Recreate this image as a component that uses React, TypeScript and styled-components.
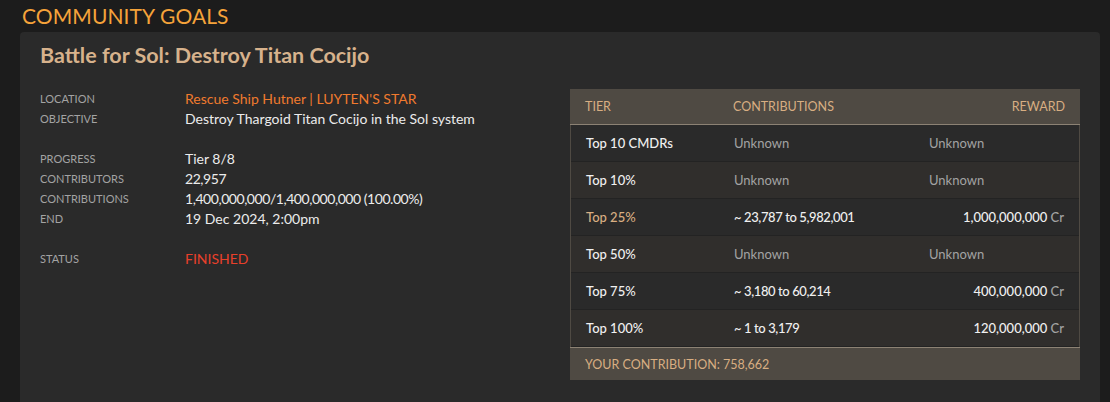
import React from "react";
import styled, { createGlobalStyle } from "styled-components";

const Global = createGlobalStyle`
  html, body { margin: 0; padding: 0; background: #1c1c1c; }
  body { font-family: "Lato", "Open Sans", sans-serif; color: #e6e6e6; }
  * { box-sizing: border-box; }
`;

const Page = styled.div`
  padding: 4px 10px 0 20px;
  height: 402px;
  overflow: hidden;
`;

const Heading = styled.h1`
  margin: 0 0 4px 2px;
  font-size: 21px;
  font-weight: 400;
  line-height: 24px;
  color: #f5a33a;
  letter-spacing: 0.1px;
`;

const Card = styled.section`
  background: #2a2a2a;
  border-radius: 4px 4px 0 0;
  padding: 10px 20px 20px 20px;
  min-height: 380px;
`;

const Title = styled.h2`
  margin: 0 0 21px 0;
  font-size: 21.5px;
  font-weight: 700;
  line-height: 26px;
  color: #d7b28c;
`;

const Body = styled.div`
  display: grid;
  grid-template-columns: 1fr 510px;
  gap: 20px;
  align-items: start;
`;

const Info = styled.div`
  display: flex;
  flex-direction: column;
  gap: 20px;
`;

const InfoGroup = styled.dl`
  margin: 0;
  display: grid;
  grid-template-columns: 145px 1fr;
`;

const Label = styled.dt`
  font-size: 11px;
  line-height: 20px;
  color: #a3a3a3;
  text-transform: uppercase;
`;

const Value = styled.dd<{ $tone?: "link" | "alert"; $num?: boolean }>`
  margin: 0;
  font-size: 14px;
  line-height: 20px;
  letter-spacing: ${(p) => (p.$num ? "-0.45px" : "0")};
  color: ${(p) => (p.$tone === "link" ? "#f07a2e" : p.$tone === "alert" ? "#e8402a" : "#ececec")};
`;

const Table = styled.div`
  border: 1px solid #4f4a43;
  border-top: none;
  background: #2a2a2a;
`;

const Grid = styled.div`
  display: grid;
  grid-template-columns: 148px 195px 1fr;
  align-items: center;
`;

const HeadRow = styled(Grid)`
  background: #4f4a43;
  height: 36px;
  border-bottom: 1px solid #8c8274;
  margin: 0 -1px;
  padding: 0 15px;
`;

const HeadCell = styled.div<{ $right?: boolean }>`
  font-size: 12.5px;
  color: #d8ae82;
  text-transform: uppercase;
  text-align: ${(p) => (p.$right ? "right" : "left")};
`;

const Row = styled(Grid)<{ $alt?: boolean }>`
  height: 37px;
  padding: 0 15px;
  background: ${(p) => (p.$alt ? "#302e2c" : "#2a2a2a")};
  border-bottom: 1px solid #232323;
  &:last-of-type { border-bottom: none; }
`;

const Cell = styled.div<{ $tone?: "muted" | "gold"; $right?: boolean; $num?: boolean }>`
  font-size: 13px;
  letter-spacing: ${(p) => (p.$num ? "-0.4px" : "0")};
  font-weight: ${(p) => (p.$tone === "muted" ? 400 : 500)};
  color: ${(p) => (p.$tone === "muted" ? "#a3a3a3" : p.$tone === "gold" ? "#d8ae82" : "#f0f0f0")};
  text-align: ${(p) => (p.$right ? "right" : "left")};
  white-space: nowrap;
`;

const Unit = styled.span`
  color: #a3a3a3;
  letter-spacing: 0;
`;

const Footer = styled.div`
  background: #4f4a43;
  border-top: 1px solid #8c8274;
  height: 33px;
  margin: 0 -1px -1px;
  padding: 0 15px;
  display: flex;
  align-items: center;
  font-size: 12.5px;
  color: #d8ae82;
  text-transform: uppercase;
`;

type Tier = { tier: string; contrib?: string; reward?: string; mine?: boolean };

const tiers: Tier[] = [
  { tier: "Top 10 CMDRs" },
  { tier: "Top 10%" },
  { tier: "Top 25%", contrib: "~ 23,787 to 5,982,001", reward: "1,000,000,000", mine: true },
  { tier: "Top 50%" },
  { tier: "Top 75%", contrib: "~ 3,180 to 60,214", reward: "400,000,000" },
  { tier: "Top 100%", contrib: "~ 1 to 3,179", reward: "120,000,000" },
];

export default function App() {
  return (
    <>
      <Global />
      <Page>
        <Heading>COMMUNITY GOALS</Heading>
        <Card>
          <Title>Battle for Sol: Destroy Titan Cocijo</Title>
          <Body>
            <Info>
              <InfoGroup>
                <Label>Location</Label>
                <Value $tone="link">Rescue Ship Hutner | LUYTEN'S STAR</Value>
                <Label>Objective</Label>
                <Value>Destroy Thargoid Titan Cocijo in the Sol system</Value>
              </InfoGroup>
              <InfoGroup>
                <Label>Progress</Label>
                <Value>Tier 8/8</Value>
                <Label>Contributors</Label>
                <Value $num>22,957</Value>
                <Label>Contributions</Label>
                <Value $num>1,400,000,000/1,400,000,000 (100.00%)</Value>
                <Label>End</Label>
                <Value>19 Dec 2024, 2:00pm</Value>
              </InfoGroup>
              <InfoGroup>
                <Label>Status</Label>
                <Value $tone="alert">FINISHED</Value>
              </InfoGroup>
            </Info>
            <Table>
              <HeadRow>
                <HeadCell>Tier</HeadCell>
                <HeadCell>Contributions</HeadCell>
                <HeadCell $right>Reward</HeadCell>
              </HeadRow>
              {tiers.map((t, i) => (
                <Row key={t.tier} $alt={i % 2 === 1}>
                  <Cell $tone={t.mine ? "gold" : undefined}>{t.tier}</Cell>
                  <Cell $tone={t.contrib ? undefined : "muted"} $num={!!t.contrib}>
                    {t.contrib ?? "Unknown"}
                  </Cell>
                  {t.reward ? (
                    <Cell $right>
                      {t.reward} <Unit>Cr</Unit>
                    </Cell>
                  ) : (
                    <Cell $tone="muted">Unknown</Cell>
                  )}
                </Row>
              ))}
              <Footer>Your contribution: 758,662</Footer>
            </Table>
          </Body>
        </Card>
      </Page>
    </>
  );
}
